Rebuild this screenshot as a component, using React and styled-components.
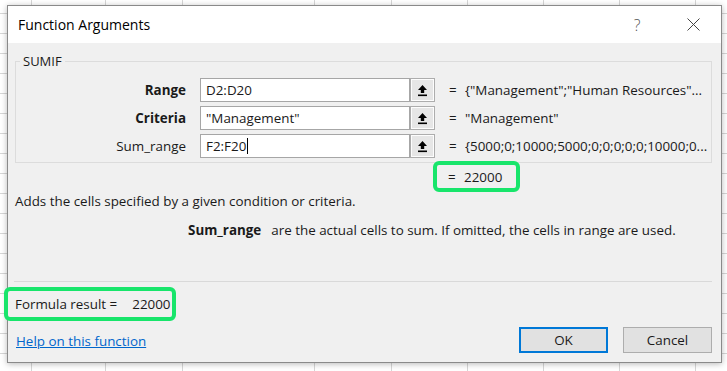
import React from 'react'
import styled, { createGlobalStyle } from 'styled-components'

const GlobalStyle = createGlobalStyle`
    html, body {
        margin: 0;
        padding: 0;
    }
    body {
        width: 727px;
        height: 371px;
        overflow: hidden;
        background-color: #ffffff;
        background-image:
            linear-gradient(#d6d6d6, #d6d6d6),
            linear-gradient(#d6d6d6, #d6d6d6),
            linear-gradient(#d6d6d6, #d6d6d6),
            linear-gradient(#d6d6d6, #d6d6d6),
            linear-gradient(#d6d6d6, #d6d6d6),
            linear-gradient(#d6d6d6, #d6d6d6),
            linear-gradient(#d6d6d6, #d6d6d6),
            linear-gradient(#d6d6d6, #d6d6d6),
            linear-gradient(#d6d6d6, #d6d6d6),
            repeating-linear-gradient(to bottom, transparent 0 19px, #d6d6d6 19px 20px);
        background-size: 1px 100%, 1px 100%, 1px 100%, 1px 100%, 1px 100%, 1px 100%, 1px 100%, 1px 100%, 1px 100%, 100% 100%;
        background-position: 31px 0, 105px 0, 182px 0, 314px 0, 391px 0, 467px 0, 543px 0, 619px 0, 695px 0, 0 -6px;
        background-repeat: no-repeat;
        font-family: "Open Sans", "Noto Sans", Arial, sans-serif;
    }
`

const Screen = styled.div`
    padding: 5px 5px 0 7px;
`

const Dialog = styled.div`
    width: 713px;
    height: 356px;
    border: 1px solid #8a8a8a;
    box-shadow: 0 1px 6px rgba(0, 0, 0, 0.28);
    background: #f0f0f0;
    display: flex;
    flex-direction: column;
    color: #1a1a1a;
    font-size: 13.4px;
`

const TitleBar = styled.div`
    height: 37px;
    background: #ffffff;
    display: flex;
    align-items: center;
    padding-left: 10px;
`

const Title = styled.div`
    flex: 1;
    font-size: 14px;
    color: #000;
`

const TitleButton = styled.div`
    width: 56px;
    height: 37px;
    display: flex;
    align-items: center;
    justify-content: center;
    color: #555;
    font-size: 16px;
    font-weight: 300;
`

const Body = styled.div`
    flex: 1;
    display: flex;
    flex-direction: column;
    padding: 0 9px 9px 7px;
`

const Group = styled.fieldset`
    margin: 10px 0 0;
    padding: 9px 0 4px;
    border: 1px solid #dcdcdc;
    min-width: 0;
`

const Legend = styled.legend`
    margin-left: 4px;
    padding: 0 3px;
    font-size: 13px;
    line-height: 16px;
`

const Rows = styled.div`
    display: flex;
    flex-direction: column;
    gap: 4px;
`

const Row = styled.div`
    display: flex;
    align-items: center;
    height: 24px;
`

const Label = styled.div`
    width: 170px;
    margin-right: 14px;
    text-align: right;
    font-weight: ${p => (p.$bold ? 700 : 400)};
    white-space: nowrap;
`

const InputBox = styled.div`
    width: 210px;
    height: 24px;
    box-sizing: border-box;
    border: 1px solid #a6a6a6;
    background: #ffffff;
    display: flex;
    align-items: center;
    padding-left: 5px;
`

const Caret = styled.span`
    display: inline-block;
    width: 1px;
    height: 16px;
    background: #000;
    margin-left: 1px;
`

const RefButton = styled.div`
    width: 25px;
    height: 24px;
    box-sizing: border-box;
    border: 1px solid #adadad;
    box-shadow: inset 0 0 0 1px #fdfdfd;
    background: #e6e6e6;
    display: flex;
    align-items: center;
    justify-content: center;
`

const Equals = styled.div`
    width: 16px;
    margin-left: ${p => (p.$flush ? 0 : 14)}px;
`

const Value = styled.div`
    white-space: nowrap;
    overflow: hidden;
`

const Highlight = styled.div`
    border: 4px solid #18e56b;
    border-radius: 6px;
    box-sizing: border-box;
    display: flex;
    align-items: center;
`

const ResultBox = styled(Highlight)`
    margin-left: 418px;
    width: 87px;
    height: 31px;
    margin-top: -2px;
    padding-left: 11px;
`

const Description = styled.div`
    line-height: 16px;
    margin-top: 1px;
`

const ArgHelp = styled.div`
    margin-top: 13px;
    margin-left: 173px;
    line-height: 16px;
    white-space: nowrap;
`

const ArgName = styled.span`
    font-weight: 700;
    margin-right: 10px;
`

const Spacer = styled.div`
    flex: 1;
`

const Separator = styled.div`
    height: 1px;
    background: #d9d9d9;
    margin-left: -1px;
`

const FormulaBox = styled(Highlight)`
    margin-top: 5px;
    margin-left: -11px;
    width: 172px;
    height: 34px;
    padding-left: 7px;
    white-space: nowrap;
`

const FormulaValue = styled.span`
    margin-left: 15px;
`

const Footer = styled.div`
    margin-top: 6px;
    display: flex;
    align-items: center;
    gap: 15px;
`

const HelpLink = styled.a`
    flex: 1;
    color: #0066cc;
    text-decoration: underline;
    margin: 2px 0 0 1px;
    cursor: pointer;
`

const Button = styled.button`
    width: 89px;
    height: 26px;
    font-family: inherit;
    font-size: 13.4px;
    color: #1a1a1a;
    background: #e1e1e1;
    border: ${p => (p.$primary ? '2px solid #0078d7' : '1px solid #adadad')};
    padding: 0;
`

const UploadIcon = () => (
    <svg width="11" height="13" viewBox="0 0 11 13">
        <path d="M5.5 1 L1 6 H3.8 V9 H7.2 V6 H10 Z" fill="#000" />
        <rect x="1" y="10.5" width="9" height="1.6" fill="#000" />
    </svg>
)

const CloseIcon = () => (
    <svg width="13" height="13" viewBox="0 0 13 13">
        <path d="M0.5 0.5 L12.5 12.5 M12.5 0.5 L0.5 12.5" stroke="#444" strokeWidth="1" />
    </svg>
)

const args = [
    { name: 'Range', bold: true, input: 'D2:D20', value: '{"Management";"Human Resources"...' },
    { name: 'Criteria', bold: true, input: '"Management"', value: '"Management"' },
    { name: 'Sum_range', bold: false, input: 'F2:F20', value: '{5000;0;10000;5000;0;0;0;0;0;10000;0...', caret: true },
]

const App = () => {
    return (
        <Screen>
            <GlobalStyle />
            <Dialog>
                <TitleBar>
                    <Title>Function Arguments</Title>
                    <TitleButton>?</TitleButton>
                    <TitleButton>
                        <CloseIcon />
                    </TitleButton>
                </TitleBar>
                <Body>
                    <Group>
                        <Legend>SUMIF</Legend>
                        <Rows>
                            {args.map(a => (
                                <Row key={a.name}>
                                    <Label $bold={a.bold}>{a.name}</Label>
                                    <InputBox>
                                        {a.input}
                                        {a.caret && <Caret />}
                                    </InputBox>
                                    <RefButton>
                                        <UploadIcon />
                                    </RefButton>
                                    <Equals>=</Equals>
                                    <Value>{a.value}</Value>
                                </Row>
                            ))}
                        </Rows>
                    </Group>
                    <ResultBox>
                        <Equals $flush>=</Equals>
                        <span>22000</span>
                    </ResultBox>
                    <Description>Adds the cells specified by a given condition or criteria.</Description>
                    <ArgHelp>
                        <ArgName>Sum_range</ArgName>
                        are the actual cells to sum. If omitted, the cells in range are used.
                    </ArgHelp>
                    <Spacer />
                    <Separator />
                    <FormulaBox>
                        Formula result =<FormulaValue>22000</FormulaValue>
                    </FormulaBox>
                    <Footer>
                        <HelpLink>Help on this function</HelpLink>
                        <Button $primary>OK</Button>
                        <Button>Cancel</Button>
                    </Footer>
                </Body>
            </Dialog>
        </Screen>
    )
}

export default App
